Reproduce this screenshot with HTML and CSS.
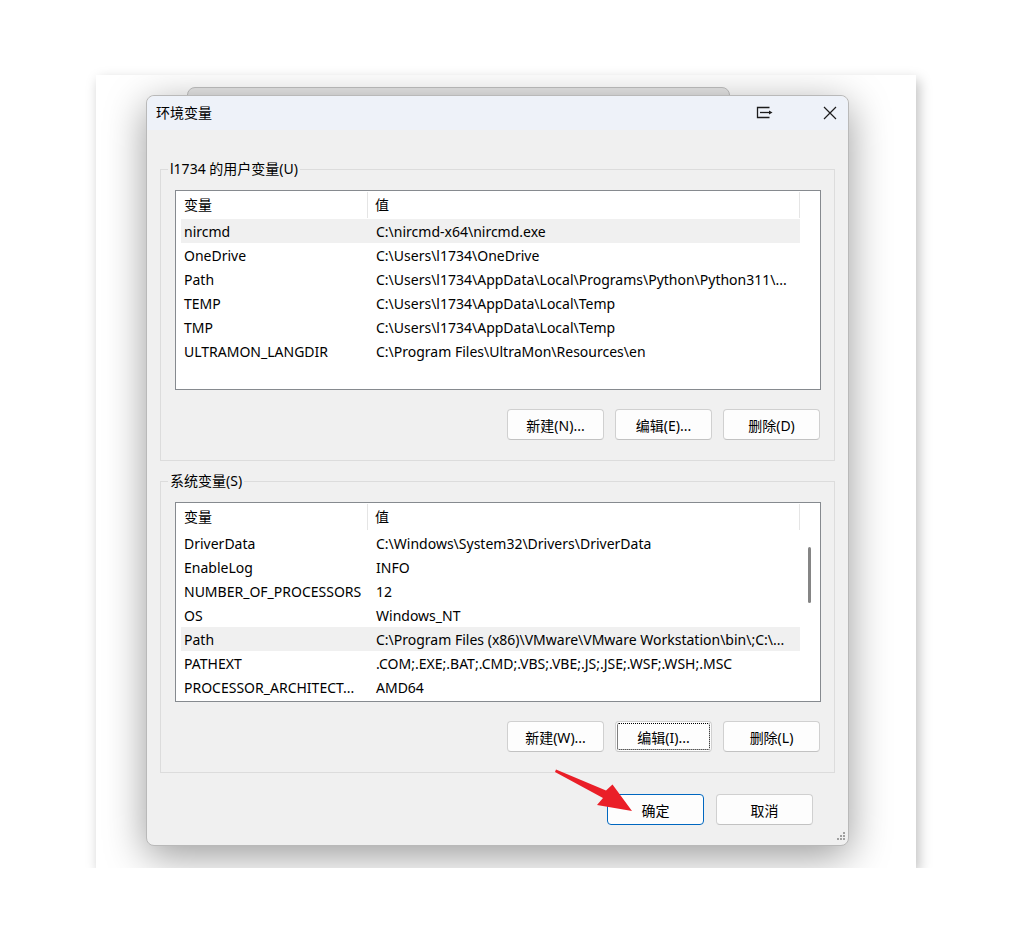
FILE: index.html
```html
<!DOCTYPE html>
<html lang="zh-CN">
<head>
    <meta charset="UTF-8">
    <meta name="viewport" content="width=device-width, initial-scale=1.0">
    <title>环境变量</title>
    <link rel="stylesheet" href="styles.css">
</head>
<body>
    <div class="shot">
        <div class="ghost-window"></div>

        <div class="dialog">
            <div class="titlebar">
                <span class="title">环境变量</span>
                <span class="tb-btn tb-restore">
                    <svg width="18" height="14" viewBox="0 0 18 14">
                        <path d="M13.5 1.5 H1.5 V11.5 H13.5" fill="none" stroke="#1c1c1c" stroke-width="1.3"/>
                        <path d="M4 6.5 H14" fill="none" stroke="#1c1c1c" stroke-width="1.3"/>
                        <path d="M13 4.5 L16.5 6.5 L13 8.5 Z" fill="#1c1c1c"/>
                    </svg>
                </span>
                <span class="tb-btn tb-close">
                    <svg width="14" height="14" viewBox="0 0 14 14">
                        <path d="M1 1 L13 13 M13 1 L1 13" fill="none" stroke="#1c1c1c" stroke-width="1.2"/>
                    </svg>
                </span>
            </div>

            <div class="dialog-body">
                <fieldset class="group">
                    <legend>l1734 的用户变量(U)</legend>
                    <div class="list">
                        <div class="list-content">
                            <div class="list-header">
                                <span class="col-name">变量</span>
                                <span class="col-value">值</span>
                            </div>
                            <div class="row selected"><span class="col-name">nircmd</span><span class="col-value">C:\nircmd-x64\nircmd.exe</span></div>
                            <div class="row"><span class="col-name">OneDrive</span><span class="col-value">C:\Users\l1734\OneDrive</span></div>
                            <div class="row"><span class="col-name">Path</span><span class="col-value">C:\Users\l1734\AppData\Local\Programs\Python\Python311\...</span></div>
                            <div class="row"><span class="col-name">TEMP</span><span class="col-value">C:\Users\l1734\AppData\Local\Temp</span></div>
                            <div class="row"><span class="col-name">TMP</span><span class="col-value">C:\Users\l1734\AppData\Local\Temp</span></div>
                            <div class="row"><span class="col-name">ULTRAMON_LANGDIR</span><span class="col-value">C:\Program Files\UltraMon\Resources\en</span></div>
                        </div>
                        <div class="scrollbar"></div>
                    </div>
                    <div class="button-row">
                        <button class="btn">新建(N)...</button>
                        <button class="btn">编辑(E)...</button>
                        <button class="btn">删除(D)</button>
                    </div>
                </fieldset>

                <fieldset class="group group-system">
                    <legend>系统变量(S)</legend>
                    <div class="list">
                        <div class="list-content">
                            <div class="list-header">
                                <span class="col-name">变量</span>
                                <span class="col-value">值</span>
                            </div>
                            <div class="row"><span class="col-name">DriverData</span><span class="col-value">C:\Windows\System32\Drivers\DriverData</span></div>
                            <div class="row"><span class="col-name">EnableLog</span><span class="col-value">INFO</span></div>
                            <div class="row"><span class="col-name">NUMBER_OF_PROCESSORS</span><span class="col-value">12</span></div>
                            <div class="row"><span class="col-name">OS</span><span class="col-value">Windows_NT</span></div>
                            <div class="row selected"><span class="col-name">Path</span><span class="col-value">C:\Program Files (x86)\VMware\VMware Workstation\bin\;C:\...</span></div>
                            <div class="row"><span class="col-name">PATHEXT</span><span class="col-value">.COM;.EXE;.BAT;.CMD;.VBS;.VBE;.JS;.JSE;.WSF;.WSH;.MSC</span></div>
                            <div class="row"><span class="col-name">PROCESSOR_ARCHITECT...</span><span class="col-value">AMD64</span></div>
                        </div>
                        <div class="scrollbar">
                            <div class="scroll-thumb"></div>
                        </div>
                    </div>
                    <div class="button-row">
                        <button class="btn">新建(W)...</button>
                        <button class="btn focused">编辑(I)...</button>
                        <button class="btn">删除(L)</button>
                    </div>
                </fieldset>

                <div class="footer">
                    <button class="btn btn-default">确定</button>
                    <button class="btn">取消</button>
                </div>
            </div>

            <svg class="grip" width="10" height="10" viewBox="0 0 10 10">
                <rect x="7" y="0" width="2" height="2" fill="#a0a0a0"/>
                <rect x="4" y="3" width="2" height="2" fill="#a0a0a0"/>
                <rect x="7" y="3" width="2" height="2" fill="#a0a0a0"/>
                <rect x="1" y="6" width="2" height="2" fill="#a0a0a0"/>
                <rect x="4" y="6" width="2" height="2" fill="#a0a0a0"/>
                <rect x="7" y="6" width="2" height="2" fill="#a0a0a0"/>
            </svg>
        </div>

        <!-- red annotation arrow pointing at the OK button -->
        <svg class="arrow" width="90" height="50" viewBox="550 765 90 50">
            <polygon points="556,769.5 606,790.5 612.5,784.5 632,811 597,805 603,798 555,772" fill="#ea1f28"/>
        </svg>
    </div>
</body>
</html>
```

FILE: styles.css
```css
* {
    margin: 0;
    padding: 0;
    box-sizing: border-box;
}

body {
    background-color: #ffffff;
    font-family: "Noto Sans", "Noto Sans CJK SC", sans-serif;
    font-size: 14px;
    color: #000000;
}

/* the screenshot area */
.shot {
    position: relative;
    width: 820px;
    height: 793px;
    margin: 75px 0 0 96px;
    background-color: #ffffff;
    overflow: hidden;
    box-shadow: 3px 5px 12px rgba(0, 0, 0, 0.25);
}

.ghost-window {
    position: absolute;
    left: 91px;
    top: 12px;
    width: 543px;
    height: 80px;
    background-color: #e8e8e8;
    border: 1px solid #c2c2c2;
    border-radius: 8px 8px 0 0;
}

.dialog {
    position: relative;
    width: 703px;
    margin: 20px 0 0 50px;
    background-color: #f0f0f0;
    border: 1px solid #b9b9b9;
    border-radius: 8px;
    box-shadow: 0 10px 40px rgba(0, 0, 0, 0.4);
}

.titlebar {
    display: flex;
    align-items: center;
    height: 34px;
    background-color: #eef2f9;
    border-radius: 8px 8px 0 0;
}

.title {
    flex: 1;
    padding-left: 9px;
    line-height: 18px;
}

.tb-btn {
    display: flex;
    align-items: center;
    justify-content: center;
    width: 36px;
    height: 34px;
}

.tb-restore {
    margin-right: 29px;
}

.dialog-body {
    padding: 30px 13px 20px 13px;
}

.group {
    border: 1px solid #dcdcdc;
    padding: 12px 13px 20px 14px;
    min-width: 0;
}

.group legend {
    margin-left: -7px;
    padding: 0 2px;
    line-height: 18px;
}

.group-system {
    margin-top: 11px;
}

.list {
    display: flex;
    height: 200px;
    background-color: #ffffff;
    border: 1px solid #868a8f;
}

.list-content {
    width: 624px;
}

.list-header {
    display: flex;
    height: 28px;
    align-items: center;
}

.list-header .col-name {
    width: 192px;
    padding-left: 8px;
    height: 26px;
    line-height: 26px;
    border-right: 1px solid #e5e5e5;
}

.list-header .col-value {
    flex: 1;
    padding-left: 7px;
    height: 26px;
    line-height: 26px;
    border-right: 1px solid #e5e5e5;
}

.row {
    display: flex;
    height: 24px;
    padding-top: 1px;
    line-height: 24px;
    margin-left: 5px;
    white-space: nowrap;
}

.row.selected {
    background-color: #f0f0f0;
}

.row .col-name {
    width: 187px;
    padding-left: 3px;
    overflow: hidden;
}

.row .col-value {
    flex: 1;
    padding-left: 8px;
    overflow: hidden;
}

.scrollbar {
    width: 20px;
}

.scroll-thumb {
    width: 3px;
    height: 56px;
    margin: 44px 0 0 8px;
    background-color: #858585;
    border-radius: 2px;
}

.button-row {
    display: flex;
    justify-content: flex-end;
    gap: 11px;
    margin-top: 19px;
    padding-right: 1px;
}

.btn {
    width: 97px;
    height: 31px;
    font-family: inherit;
    font-size: 14px;
    color: #000000;
    background-color: #fdfdfd;
    border: 1px solid #d0d0d0;
    border-bottom-color: #c2c2c2;
    border-radius: 4px;
}

.btn.focused {
    outline: 1px dotted #000000;
    outline-offset: -3px;
}

.btn-default {
    border: 1px solid #0067c0;
}

.footer {
    display: flex;
    justify-content: flex-end;
    gap: 12px;
    margin-top: 21px;
    padding-right: 22px;
}

.grip {
    position: absolute;
    right: 2px;
    bottom: 3px;
}

.arrow {
    position: absolute;
    left: 454px;
    top: 690px;
}
```
